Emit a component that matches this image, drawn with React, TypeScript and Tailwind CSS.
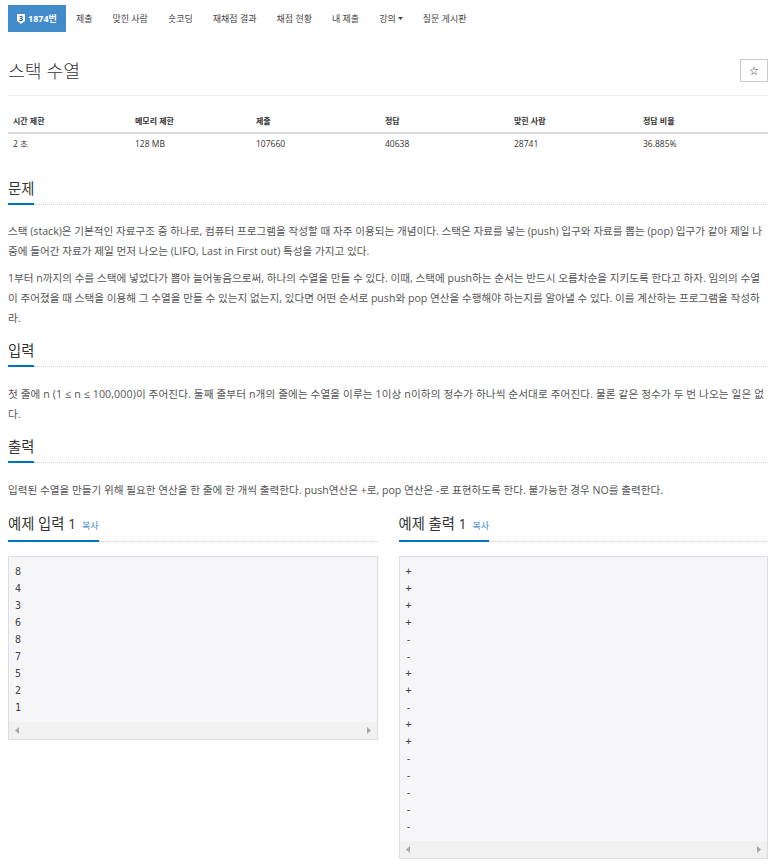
import React from "react";

const navItems = ["제출", "맞힌 사람", "숏코딩", "재채점 결과", "채점 현황", "내 제출", "강의", "질문 게시판"];

const stats = [
  { label: "시간 제한", value: "2 초", w: "w-[122px]" },
  { label: "메모리 제한", value: "128 MB", w: "w-[121px]" },
  { label: "제출", value: "107660", w: "w-[129px]" },
  { label: "정답", value: "40638", w: "w-[129px]" },
  { label: "맞힌 사람", value: "28741", w: "w-[129px]" },
  { label: "정답 비율", value: "36.885%", w: "w-[130px]" },
];

const sampleInput = ["8", "4", "3", "6", "8", "7", "5", "2", "1"];
const sampleOutput = ["+", "+", "+", "+", "-", "-", "+", "+", "-", "+", "+", "-", "-", "-", "-", "-"];

const Heading = ({ children }: { children: React.ReactNode }) => (
  <div className="flex">
    <h2 className="border-b-2 border-[#0076c0] pb-[5px] text-[14.3px] leading-[18px] text-[#333]">{children}</h2>
    <div className="flex-1 border-b border-dotted border-[#d0d0d0]" />
  </div>
);

const ScrollBar = () => (
  <div className="flex h-[17px] items-center justify-between bg-[#f1f1f1] pl-[6px] pr-[6px]">
    <svg width="4" height="7" viewBox="0 0 4 7">
      <path d="M4 0L0 3.5L4 7Z" fill="#a8a8a8" />
    </svg>
    <svg width="4" height="7" viewBox="0 0 4 7">
      <path d="M0 0L4 3.5L0 7Z" fill="#a8a8a8" />
    </svg>
  </div>
);

const SampleBox = ({ lines }: { lines: string[] }) => (
  <div className="mt-[14px] border border-[#dddde3] bg-[#f6f6f8]">
    <pre className="px-[6px] pb-[6px] pt-[6px] font-['DejaVu_Sans_Mono',monospace] text-[10px] leading-[17px] text-[#444]">
      {lines.join("\n")}
    </pre>
    <ScrollBar />
  </div>
);

const Badge = () => (
  <span className="relative inline-flex h-[10px] w-[8px] items-center justify-center">
    <svg width="8" height="10" viewBox="0 0 8 10" className="absolute inset-0">
      <path d="M0 0H8V7L4 10L0 7Z" fill="#f4f4f4" />
    </svg>
    <span className="relative text-[7px] font-bold leading-none text-[#435f7a]">3</span>
  </span>
);

const Para = ({ children, className = "" }: { children: React.ReactNode; className?: string }) => (
  <p className={`mb-[7px] ${className}`}>{children}</p>
);

export default function App() {
  return (
    <div className="ml-2 w-[760px] font-['Open_Sans','Noto_Sans_CJK_KR',sans-serif] text-[#333]">
      {/* nav */}
      <nav className="mt-[5px] flex h-[27px] items-center text-[9px]">
        <div className="flex h-full items-center gap-[3px] bg-[#428bca] px-[9px] font-bold text-white">
          <Badge />
          <span>1874번</span>
        </div>
        {navItems.map((item) => (
          <div key={item} className="flex h-full items-center px-[10px] text-[#444]">
            {item}
            {item === "강의" && (
              <svg width="5" height="3" viewBox="0 0 5 3" className="ml-[2px]">
                <path d="M0 0H5L2.5 3Z" fill="#444" />
              </svg>
            )}
          </div>
        ))}
      </nav>

      {/* title */}
      <div className="mt-[26px] flex items-center justify-between border-b border-[#eee] pb-[12px]">
        <h1 className="text-[18.3px] font-light leading-[25px] text-[#333]">스택 수열</h1>
        <button className="flex h-[23px] w-[28px] items-center justify-center border border-[#ccc] bg-white text-[9px] text-[#333]">
          ☆
        </button>
      </div>

      {/* stats */}
      <div className="mt-[14px] text-[8px]">
        <div className="flex h-[24px] items-center border-b-2 border-[#ddd] font-bold">
          {stats.map((s) => (
            <div key={s.label} className={`${s.w} pl-[5px]`}>
              {s.label}
            </div>
          ))}
        </div>
        <div className="flex h-[20px] items-center text-[8.5px]">
          {stats.map((s) => (
            <div key={s.label} className={`${s.w} pl-[5px]`}>
              {s.value}
            </div>
          ))}
        </div>
      </div>

      {/* sections */}
      <section className="mb-[14px] mt-[26px]">
        <Heading>문제</Heading>
        <div className="mt-[16px] text-[10.6px] leading-[20px] text-[#555]">
          <Para>
            스택 (stack)은 기본적인 자료구조 중 하나로, 컴퓨터 프로그램을 작성할 때 자주 이용되는 개념이다. 스택은 자료를 넣는 (push) 입구와 자료를 뽑는 (pop) 입구가 같아 제일 나중에 들어간 자료가 제일 먼저 나오는 (LIFO, Last in First out) 특성을 가지고 있다.
          </Para>
          <Para>
            1부터 n까지의 수를 스택에 넣었다가 뽑아 늘어놓음으로써, 하나의 수열을 만들 수 있다. 이때, 스택에 push하는 순서는 반드시 오름차순을 지키도록 한다고 하자. 임의의 수열이 주어졌을 때 스택을 이용해 그 수열을 만들 수 있는지 없는지, 있다면 어떤 순서로 push와 pop 연산을 수행해야 하는지를 알아낼 수 있다. 이를 계산하는 프로그램을 작성하라.
          </Para>
        </div>
      </section>

      <section className="mb-[14px]">
        <Heading>입력</Heading>
        <div className="mt-[17px] text-[10.6px] leading-[20px] text-[#555]">
          <Para className="tracking-[0.12px]">
            첫 줄에 n (1 ≤ n ≤ 100,000)이 주어진다. 둘째 줄부터 n개의 줄에는 수열을 이루는 1이상 n이하의 정수가 하나씩 순서대로 주어진다. 물론 같은 정수가 두 번 나오는 일은 없다.
          </Para>
        </div>
      </section>

      <section className="mb-[15px]">
        <Heading>출력</Heading>
        <div className="mt-[17px] text-[10.6px] leading-[20px] text-[#555]">
          <Para>
            입력된 수열을 만들기 위해 필요한 연산을 한 줄에 한 개씩 출력한다. push연산은 +로, pop 연산은 -로 표현하도록 한다. 불가능한 경우 NO를 출력한다.
          </Para>
        </div>
      </section>

      <div className="grid grid-cols-2 gap-[21px]">
        <div>
          <Heading>
            예제 입력 1 <span className="ml-[2px] text-[9px] text-[#428bca]">복사</span>
          </Heading>
          <SampleBox lines={sampleInput} />
        </div>
        <div>
          <Heading>
            예제 출력 1 <span className="ml-[2px] text-[9px] text-[#428bca]">복사</span>
          </Heading>
          <SampleBox lines={sampleOutput} />
        </div>
      </div>
    </div>
  );
}
